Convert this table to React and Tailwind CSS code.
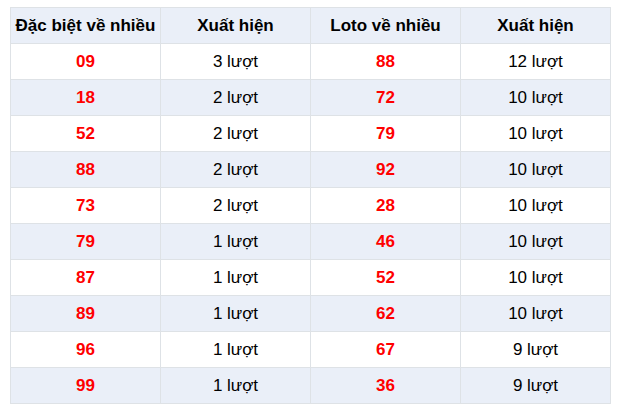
import React from "react";

const rows = [
  ["09", "3 lượt", "88", "12 lượt"],
  ["18", "2 lượt", "72", "10 lượt"],
  ["52", "2 lượt", "79", "10 lượt"],
  ["88", "2 lượt", "92", "10 lượt"],
  ["73", "2 lượt", "28", "10 lượt"],
  ["79", "1 lượt", "46", "10 lượt"],
  ["87", "1 lượt", "52", "10 lượt"],
  ["89", "1 lượt", "62", "10 lượt"],
  ["96", "1 lượt", "67", "9 lượt"],
  ["99", "1 lượt", "36", "9 lượt"],
];

export default function App() {
  return (
    <div className="bg-white w-[618px] h-[411px] pt-[7px] pl-[10px]" style={{ fontFamily: '"Liberation Sans", Arial, sans-serif' }}>
      <table className="border-collapse text-[17px] text-black">
        <thead>
          <tr className="bg-[#eaeff8]">
            {["Đặc biệt về nhiều", "Xuất hiện", "Loto về nhiều", "Xuất hiện"].map((h, i) => (
              <th key={i} className="w-[150px] h-[36px] border border-[#dee2e6] font-bold text-center p-0">{h}</th>
            ))}
          </tr>
        </thead>
        <tbody>
          {rows.map((r, i) => (
            <tr key={i} className={i % 2 === 1 ? "bg-[#eaeff8]" : "bg-white"}>
              <td className="w-[150px] h-[36px] border border-[#dee2e6] text-center font-bold text-[#ff0000] p-0">{r[0]}</td>
              <td className="w-[150px] h-[36px] border border-[#dee2e6] text-center p-0">{r[1]}</td>
              <td className="w-[150px] h-[36px] border border-[#dee2e6] text-center font-bold text-[#ff0000] p-0">{r[2]}</td>
              <td className="w-[150px] h-[36px] border border-[#dee2e6] text-center p-0">{r[3]}</td>
            </tr>
          ))}
        </tbody>
      </table>
    </div>
  );
}
